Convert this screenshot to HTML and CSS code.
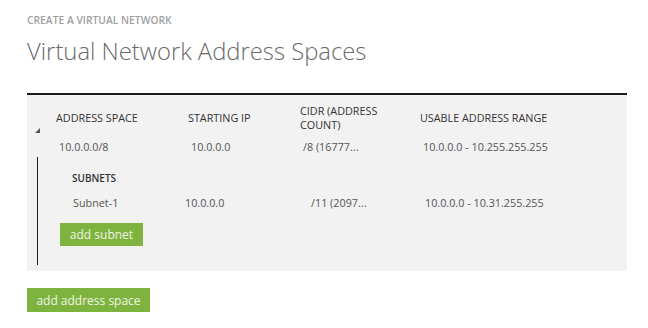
FILE: index.html
```html
<!DOCTYPE html>
<html lang="en">
<head>
    <meta charset="UTF-8">
    <title>Virtual Network Address Spaces</title>
    <link rel="stylesheet" href="styles.css">
</head>
<body>
    <div class="page">
        <div class="eyebrow">CREATE A VIRTUAL NETWORK</div>
        <h1>Virtual Network Address Spaces</h1>

        <div class="panel">
            <div class="space-row">
                <div class="toggle"><span class="tri"></span></div>
                <div class="space-body">
                    <div class="grid head">
                        <div>ADDRESS SPACE</div>
                        <div>STARTING IP</div>
                        <div>CIDR (ADDRESS<br>COUNT)</div>
                        <div>USABLE ADDRESS RANGE</div>
                    </div>
                    <div class="grid values">
                        <div>10.0.0.0/8</div>
                        <div>10.0.0.0</div>
                        <div>/8 (16777...</div>
                        <div>10.0.0.0 - 10.255.255.255</div>
                    </div>
                </div>
            </div>

            <div class="subnets">
                <div class="subnets-title">SUBNETS</div>
                <div class="subnet-grid">
                    <div>Subnet-1</div>
                    <div>10.0.0.0</div>
                    <div>/11 (2097...</div>
                    <div>10.0.0.0 - 10.31.255.255</div>
                </div>
                <button class="btn small">add subnet</button>
            </div>
        </div>

        <button class="btn">add address space</button>
    </div>
</body>
</html>
```

FILE: styles.css
```css
* {
    margin: 0;
    padding: 0;
    box-sizing: border-box;
}

body {
    font-family: 'Open Sans', 'Segoe UI', sans-serif;
    background: #fff;
    color: #444;
}

.page {
    padding: 13px 22px 0 27px;
}

.eyebrow {
    font-size: 10.3px;
    font-weight: 600;
    color: #a0a0a0;
    line-height: 14px;
}

h1 {
    font-size: 23.8px;
    font-weight: 300;
    color: #6a6a6a;
    line-height: 30px;
    margin-top: 9px;
}

.panel {
    margin-top: 27px;
    width: 600px;
    height: 178px;
    background: #f2f2f2;
    border-top: 2px solid #1a1a1a;
    padding: 6px 0 0 0;
}

.space-row {
    display: flex;
}

.toggle {
    width: 29px;
    padding-top: 27px;
    padding-left: 8px;
}

.tri {
    display: block;
    width: 0;
    height: 0;
    border-left: 5px solid transparent;
    border-bottom: 5px solid #555;
}

.space-body {
    flex: 1;
}

.grid {
    display: grid;
    grid-template-columns: 132px 112px 120px 1fr;
    font-size: 10.8px;
    line-height: 14px;
}

.head {
    color: #333;
    height: 34px;
    align-items: center;
}

.values {
    color: #555;
    padding-left: 3px;
    margin-top: 5px;
}

.subnets {
    margin: 3px 0 0 10px;
    border-left: 1px solid #222;
    height: 108px;
    padding: 14px 0 0 34px;
}

.subnets-title {
    font-size: 10px;
    font-weight: 600;
    color: #333;
    line-height: 14px;
}

.subnet-grid {
    display: grid;
    grid-template-columns: 112px 126px 114px 1fr;
    font-size: 10.8px;
    line-height: 14px;
    color: #555;
    margin-top: 11px;
    padding-left: 1px;
}

.btn {
    display: block;
    background: #7fb340;
    color: #eef5e4;
    border: none;
    font-family: 'Open Sans', sans-serif;
    font-size: 12px;
    height: 24px;
    padding: 0;
    cursor: pointer;
}

.btn.small {
    margin-top: 13px;
    margin-left: -12px;
    height: 23px;
    width: 83px;
}

.page > .btn {
    margin-top: 17px;
    width: 123px;
}
```
